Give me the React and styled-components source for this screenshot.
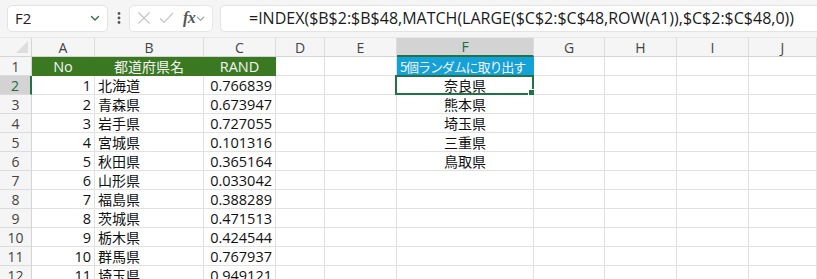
import React from 'react';
import styled, { createGlobalStyle } from 'styled-components';

const GlobalStyle = createGlobalStyle`
  html, body {
    margin: 0;
    padding: 0;
    background: #ffffff;
  }
  body {
    font-family: "Noto Sans CJK JP", "Noto Sans", sans-serif;
    overflow: hidden;
  }
`;

const Page = styled.div`
  width: 817px;
  height: 279px;
  overflow: hidden;
  background: #ffffff;
`;

const Toolbar = styled.div`
  display: flex;
  align-items: center;
  height: 38px;
  padding: 0 0 1px 7px;
  box-sizing: border-box;
  background: #f5f5f5;
  border-bottom: 1px solid #e6e6e6;
`;

const NameBox = styled.div`
  flex-shrink: 0;
  display: flex;
  align-items: center;
  justify-content: space-between;
  width: 101px;
  height: 27px;
  box-sizing: border-box;
  padding: 0 6px 0 7px;
  background: #fff;
  border: 1px solid #e3e3e3;
  border-radius: 5px;
  font-family: "Open Sans", "Noto Sans", sans-serif;
  font-size: 15px;
  color: #222;
`;

const Dots = styled.div`
  flex-shrink: 0;
  width: 21px;
  display: flex;
  justify-content: center;
`;

const IconBox = styled.div`
  flex-shrink: 0;
  display: flex;
  align-items: center;
  gap: 8px;
  width: 84px;
  height: 27px;
  box-sizing: border-box;
  padding: 0 2px 0 7px;
  background: #fff;
  border: 1px solid #e6e6e6;
  border-radius: 5px;
  overflow: hidden;
`;

const FxGroup = styled.span`
  display: flex;
  align-items: center;
`;

const Fx = styled.span`
  font-family: "Liberation Serif", "DejaVu Serif", serif;
  font-style: italic;
  font-weight: bold;
  font-size: 16px;
  color: #555;
  margin-left: 1px;
  letter-spacing: -0.5px;
`;

const FormulaBox = styled.div`
  flex: 1 1 0;
  min-width: 0;
  margin-left: 7px;
  height: 27px;
  box-sizing: border-box;
  display: flex;
  align-items: center;
  background: #fff;
  border: 1px solid #e3e3e3;
  border-right: none;
  border-radius: 5px 0 0 5px;
  overflow: hidden;
`;

const FormulaText = styled.span`
  margin-left: 28px;
  font-family: "Open Sans", "Noto Sans", sans-serif;
  font-size: 16px;
  color: #1a1a1a;
  white-space: nowrap;
`;

const Sheet = styled.div`
  display: grid;
  grid-template-columns: 32px 63px 109px 72px 49px 72px 137px 71px 72px 72px 1fr;
  grid-auto-rows: 19px;
`;

const ColHead = styled.div`
  box-sizing: border-box;
  display: flex;
  align-items: center;
  justify-content: center;
  background: ${(p) => (p.$active ? '#d3d3d3' : '#f5f5f5')};
  color: ${(p) => (p.$active ? '#1d6b3f' : '#444')};
  border-right: 1px solid #dcdcdc;
  border-bottom: ${(p) => (p.$active ? '2px solid #217346' : '1px solid #d4d4d4')};
  font-family: "Open Sans", "Noto Sans", sans-serif;
  font-size: 14px;
`;

const Corner = styled.div`
  position: relative;
  box-sizing: border-box;
  background: #f5f5f5;
  border-right: 1px solid #d4d4d4;
  border-bottom: 1px solid #d4d4d4;
`;

const CornerTri = styled.div`
  position: absolute;
  right: 3px;
  bottom: 3px;
  width: 0;
  height: 0;
  border-left: 12px solid transparent;
  border-bottom: 12px solid #dedede;
`;

const RowHead = styled.div`
  box-sizing: border-box;
  display: flex;
  align-items: center;
  justify-content: center;
  background: ${(p) => (p.$active ? '#d3d3d3' : '#f5f5f5')};
  color: ${(p) => (p.$active ? '#1d6b3f' : '#444')};
  border-right: ${(p) => (p.$active ? '2px solid #217346' : '1px solid #d4d4d4')};
  border-bottom: 1px solid #dcdcdc;
  font-family: "Open Sans", "Noto Sans", sans-serif;
  font-size: 14px;
`;

const Cell = styled.div`
  position: relative;
  box-sizing: border-box;
  display: flex;
  align-items: center;
  justify-content: ${(p) => p.$align || 'flex-start'};
  padding: 0 3px;
  white-space: nowrap;
  overflow: visible;
  font-family: "Noto Sans CJK JP", "Noto Sans", sans-serif;
  font-size: 14px;
  color: ${(p) => (p.$light ? '#f4f4f4' : '#111')};
  background: ${(p) => p.$bg || '#fff'};
  border-right: 1px solid ${(p) => p.$bg || '#e1e1e1'};
  border-bottom: 1px solid ${(p) => p.$bg || '#e1e1e1'};
`;

const Num = styled.span`
  font-family: "Open Sans", "Noto Sans", sans-serif;
  font-size: 14.5px;
`;

const Caption = styled.span`
  font-size: 13px;
  letter-spacing: -1.1px;
`;

const Selection = styled.div`
  position: absolute;
  left: -2px;
  top: -1px;
  right: -1px;
  bottom: -1px;
  border: 2px solid #217346;
  pointer-events: none;
`;

const Handle = styled.div`
  position: absolute;
  right: -4px;
  bottom: -4px;
  width: 6px;
  height: 6px;
  background: #217346;
  border: 1px solid #fff;
`;

const columns = ['A', 'B', 'C', 'D', 'E', 'F', 'G', 'H', 'I', 'J'];

const data = [
  [1, '北海道', '0.766839'],
  [2, '青森県', '0.673947'],
  [3, '岩手県', '0.727055'],
  [4, '宮城県', '0.101316'],
  [5, '秋田県', '0.365164'],
  [6, '山形県', '0.033042'],
  [7, '福島県', '0.388289'],
  [8, '茨城県', '0.471513'],
  [9, '栃木県', '0.424544'],
  [10, '群馬県', '0.767937'],
  [11, '埼玉県', '0.949121'],
];

const picks = ['奈良県', '熊本県', '埼玉県', '三重県', '鳥取県'];

const GREEN = '#3a7822';
const BLUE = '#13a1d8';

const Chevron = ({ color = '#555', size = 12 }) => (
  <svg width={size} height={size} viewBox="0 0 12 12" fill="none">
    <path d="M2.5 4.5 L6 8 L9.5 4.5" stroke={color} strokeWidth="1.3" strokeLinecap="round" strokeLinejoin="round" />
  </svg>
);

const Blank = ({ n }) =>
  Array.from({ length: n }).map((_, i) => <Cell key={`b${i}`} />);

const App = () => {
  return (
    <Page>
      <GlobalStyle />
      <Toolbar>
        <NameBox>
          <span>F2</span>
          <Chevron color="#2e6b47" />
        </NameBox>
        <Dots>
          <svg width="4" height="14" viewBox="0 0 4 14">
            <circle cx="2" cy="2.5" r="1.4" fill="#555" />
            <circle cx="2" cy="7" r="1.4" fill="#555" />
            <circle cx="2" cy="11.5" r="1.4" fill="#555" />
          </svg>
        </Dots>
        <IconBox>
          <svg width="14" height="14" viewBox="0 0 14 14">
            <path d="M1.5 1.5 L12.5 12.5 M12.5 1.5 L1.5 12.5" stroke="#c4c4c4" strokeWidth="1.1" />
          </svg>
          <svg width="15" height="14" viewBox="0 0 15 14">
            <path d="M1 7.5 L5 11.5 L14 2" stroke="#c4c4c4" strokeWidth="1.1" fill="none" />
          </svg>
          <FxGroup>
            <Fx>fx</Fx>
            <Chevron color="#a0a0a0" size={11} />
          </FxGroup>
        </IconBox>
        <FormulaBox>
          <FormulaText>=INDEX($B$2:$B$48,MATCH(LARGE($C$2:$C$48,ROW(A1)),$C$2:$C$48,0))</FormulaText>
        </FormulaBox>
      </Toolbar>

      <Sheet>
        <Corner>
          <CornerTri />
        </Corner>
        {columns.map((c) => (
          <ColHead key={c} $active={c === 'F'}>{c}</ColHead>
        ))}

        <RowHead>1</RowHead>
        <Cell $bg={GREEN} $light $align="center"><Num>No</Num></Cell>
        <Cell $bg={GREEN} $light $align="center">都道府県名</Cell>
        <Cell $bg={GREEN} $light $align="center"><Num>RAND</Num></Cell>
        <Blank n={2} />
        <Cell $bg={BLUE} $light><Caption>5個ランダムに取り出す</Caption></Cell>
        <Blank n={4} />

        {data.map(([no, pref, rand], i) => (
          <React.Fragment key={no}>
            <RowHead $active={i === 0}>{no + 1}</RowHead>
            <Cell $align="flex-end"><Num>{no}</Num></Cell>
            <Cell>{pref}</Cell>
            <Cell $align="flex-end"><Num>{rand}</Num></Cell>
            <Blank n={2} />
            <Cell $align="center">
              {picks[i] || ''}
              {i === 0 && (
                <Selection>
                  <Handle />
                </Selection>
              )}
            </Cell>
            <Blank n={4} />
          </React.Fragment>
        ))}
      </Sheet>
    </Page>
  );
};

export default App;
